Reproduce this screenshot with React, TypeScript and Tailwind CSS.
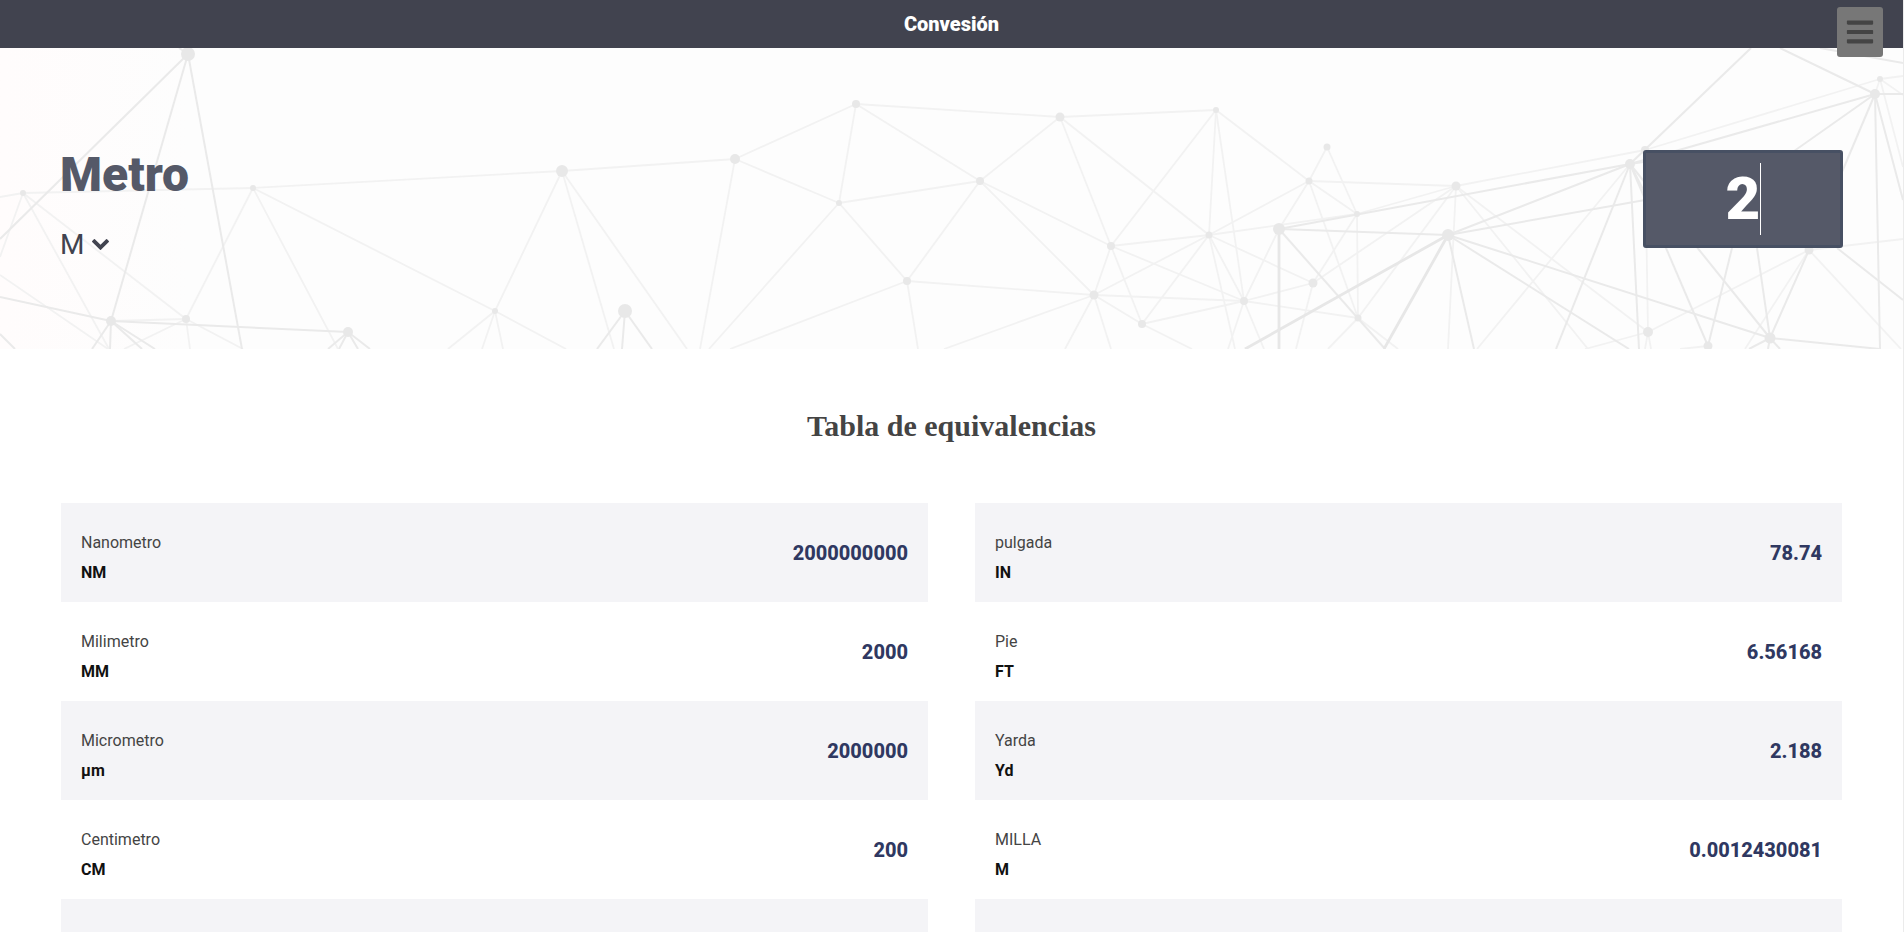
import { useState } from "react";
import { FaBars } from "react-icons/fa";

type Line = [number, number, number, number];
type Node = [number, number, number];

const thinLines: Line[] = [
  [23, 193, 0, 197], [23, 193, 253, 188], [23, 193, 0, 257], [23, 193, 109, 349], [23, 193, 186, 319],
  [253, 188, 562, 171], [253, 188, 186, 319], [253, 188, 338, 349], [253, 188, 495, 311], [0, 275, 108, 349],
  [111, 321, 186, 319], [186, 319, 190, 349], [186, 319, 243, 349], [186, 319, 124, 349], [495, 311, 448, 349],
  [562, 171, 735, 159], [562, 171, 495, 311], [562, 171, 614, 349], [562, 171, 687, 349], [735, 159, 856, 104],
  [735, 159, 839, 203], [735, 159, 700, 349], [856, 104, 839, 203], [856, 104, 980, 181], [856, 104, 1060, 117],
  [839, 203, 980, 181], [839, 203, 907, 281], [839, 203, 709, 349], [907, 281, 980, 181], [907, 281, 1094, 295],
  [907, 281, 730, 349], [907, 281, 918, 349], [495, 311, 482, 349], [495, 311, 503, 349], [495, 311, 566, 349],
  [1094, 295, 944, 349], [1060, 117, 1216, 110], [1060, 117, 980, 181], [1060, 117, 1111, 246], [1060, 117, 1209, 235],
  [1216, 110, 1111, 246], [1216, 110, 1209, 235], [1216, 110, 1244, 301], [1216, 110, 1309, 181], [980, 181, 1111, 246],
  [980, 181, 1094, 295], [1111, 246, 1094, 295], [1111, 246, 1209, 235], [1111, 246, 1142, 324], [1111, 246, 1244, 301],
  [1209, 235, 1094, 295], [1209, 235, 1142, 324], [1209, 235, 1244, 301], [1209, 235, 1313, 283], [1209, 235, 1309, 181],
  [1209, 235, 1357, 214], [1209, 235, 1235, 349], [1094, 295, 1244, 301], [1094, 295, 1142, 324], [1094, 295, 1065, 349],
  [1094, 295, 1111, 349], [1142, 324, 1244, 301], [1142, 324, 1192, 349], [1244, 301, 1313, 283], [1244, 301, 1358, 318],
  [1244, 301, 1228, 349], [1244, 301, 1264, 349], [1244, 301, 1279, 229], [1279, 229, 1309, 181], [1309, 181, 1327, 147],
  [1309, 181, 1456, 186], [1309, 181, 1357, 214], [1309, 181, 1358, 318], [1327, 147, 1357, 214], [1357, 214, 1313, 283],
  [1357, 214, 1358, 318], [1357, 214, 1456, 186], [1313, 283, 1296, 349], [1313, 283, 1456, 186], [1358, 318, 1456, 186],
  [1358, 318, 1328, 349], [1358, 318, 1398, 349], [1456, 186, 1645, 150], [1645, 150, 1880, 79], [1880, 79, 1903, 76],
  [1880, 79, 1903, 95], [1880, 79, 1903, 167], [1880, 79, 1875, 94], [1809, 250, 1745, 349], [1809, 250, 1648, 332],
  [1809, 250, 1903, 239], [1809, 250, 1901, 349], [1645, 150, 1648, 332], [1630, 164, 1477, 349], [1456, 186, 1448, 349],
  [1456, 186, 1648, 332], [1456, 186, 1588, 349], [1648, 332, 1585, 349], [1648, 332, 1645, 349], [1648, 332, 1651, 349],
  [1708, 346, 1680, 349],
];

const mediumLines: Line[] = [
  [188, 54, 0, 239], [188, 54, 111, 321], [188, 54, 242, 349], [188, 54, 179, 48], [111, 321, 0, 297],
  [111, 321, 348, 332], [111, 321, 92, 349], [111, 321, 110, 349], [111, 321, 142, 349], [111, 321, 155, 349],
  [348, 332, 328, 349], [348, 332, 339, 349], [348, 332, 358, 349], [348, 332, 370, 349], [0, 334, 15, 349],
  [625, 311, 597, 349], [625, 311, 622, 349], [625, 311, 652, 349], [1279, 229, 1630, 164], [1279, 229, 1448, 235],
  [1279, 229, 1385, 349], [1448, 235, 1630, 164], [1448, 235, 1645, 200], [1448, 235, 1474, 349], [1448, 235, 1629, 349],
  [1448, 235, 1770, 338], [1630, 164, 1875, 94], [1630, 164, 1751, 48], [1780, 48, 1875, 94], [1820, 48, 1903, 63],
  [1875, 94, 1903, 94], [1875, 94, 1809, 250], [1875, 94, 1770, 168], [1875, 94, 1880, 349], [1875, 94, 1903, 200],
  [1630, 164, 1650, 161], [1630, 164, 1650, 203], [1630, 164, 1639, 349], [1630, 164, 1556, 349], [1630, 164, 1708, 346],
  [1630, 164, 1770, 338], [1732, 248, 1708, 346], [1757, 248, 1770, 338], [1809, 250, 1770, 338], [1837, 248, 1903, 300],
  [1770, 338, 1880, 349], [1770, 338, 1749, 349], [1770, 338, 1768, 349], [1770, 338, 1780, 349],
];

const thickLines: Line[] = [
  [1448, 235, 1245, 349], [1448, 235, 1384, 349], [1279, 229, 1279, 349],
];

const nodes: Node[] = [
  [188, 54, 7], [23, 193, 3], [253, 188, 3], [111, 321, 5], [186, 319, 4], [348, 332, 5], [562, 171, 6],
  [735, 159, 5], [856, 104, 4], [839, 203, 3], [907, 281, 4], [495, 311, 3], [625, 311, 7], [1060, 117, 4.5],
  [1216, 110, 3], [980, 181, 4], [1111, 246, 4], [1094, 295, 4.5], [1142, 324, 4], [1209, 235, 3.5],
  [1244, 301, 4], [1279, 229, 6], [1309, 181, 3.5], [1327, 147, 3.5], [1357, 214, 3], [1313, 283, 4.5],
  [1358, 318, 3.5], [1456, 186, 4.5], [1448, 235, 6], [1630, 164, 5], [1645, 150, 4], [1875, 94, 5],
  [1880, 79, 3], [1809, 250, 4.5], [1648, 332, 5], [1708, 346, 4.5], [1770, 338, 5.5],
];

function LineGroup({ lines, stroke, width }: { lines: Line[]; stroke: string; width: number }) {
  return (
    <g stroke={stroke} strokeWidth={width}>
      {lines.map(([x1, y1, x2, y2], i) => (
        <line key={i} x1={x1} y1={y1} x2={x2} y2={y2} />
      ))}
    </g>
  );
}

function Network() {
  return (
    <svg
      className="absolute inset-0 h-full w-full"
      viewBox="0 48 1903 301"
      preserveAspectRatio="xMidYMid slice"
      aria-hidden="true"
    >
      <LineGroup lines={thinLines} stroke="#f2f2f2" width={1.8} />
      <LineGroup lines={mediumLines} stroke="#eaeaea" width={2} />
      <LineGroup lines={thickLines} stroke="#e7e7e7" width={2.8} />
      <g fill="#e8e8e8">
        {nodes.map(([cx, cy, r], i) => (
          <circle key={i} cx={cx} cy={cy} r={r} />
        ))}
      </g>
    </svg>
  );
}

function ChevronDown() {
  return (
    <svg
      className="pointer-events-none h-[11px] w-[17px]"
      viewBox="90 533 1612 1035"
      fill="currentColor"
      aria-hidden="true"
    >
      <path d="M1683 808l-742 741q-19 19-45 19t-45-19l-742-741q-19-19-19-45.500t19-45.500l166-165q19-19 45-19t45 19l531 531 531-531q19-19 45-19t45 19l166 165q19 19 19 45.500t-19 45.500z" />
    </svg>
  );
}

interface Unit {
  name: string;
  symbol: string;
  value: string;
}

const metric: Unit[] = [
  { name: "Nanometro", symbol: "NM", value: "2000000000" },
  { name: "Milimetro", symbol: "MM", value: "2000" },
  { name: "Micrometro", symbol: "µm", value: "2000000" },
  { name: "Centimetro", symbol: "CM", value: "200" },
];

const imperial: Unit[] = [
  { name: "pulgada", symbol: "IN", value: "78.74" },
  { name: "Pie", symbol: "FT", value: "6.56168" },
  { name: "Yarda", symbol: "Yd", value: "2.188" },
  { name: "MILLA", symbol: "M", value: "0.0012430081" },
];

function UnitList({ units }: { units: Unit[] }) {
  return (
    <ul className="min-w-0 flex-1">
      {units.map((unit) => (
        <li
          key={unit.name}
          className="flex h-[99px] items-center justify-between px-5 odd:bg-[#f4f4f7]"
        >
          <div className="pt-[10px] leading-[30px]">
            <p className="text-[#444]">{unit.name}</p>
            <p className="font-bold text-[#111]">{unit.symbol}</p>
          </div>
          <p className="text-xl font-extrabold text-[#2f3861]">{unit.value}</p>
        </li>
      ))}
      <li className="h-[99px] odd:bg-[#f4f4f7]" />
    </ul>
  );
}

export default function App() {
  const [amount, setAmount] = useState("2");

  return (
    <div className="h-screen overflow-hidden border-r border-[#ebebeb] bg-white font-[Roboto,sans-serif] text-base">
      <header className="relative z-10 flex h-12 items-center justify-center bg-[#41434f]">
        <h1 className="text-xl font-black text-white">Convesión</h1>
        <button
          type="button"
          aria-label="Menú"
          className="absolute top-[7px] right-5 flex h-[50px] w-[46px] items-center justify-center rounded-[3px] bg-[#777] text-[#444]"
        >
          <FaBars className="size-[30px]" />
        </button>
      </header>

      <section className="relative h-[301px] bg-[#fdfdfd] bg-linear-to-r from-[#fffcfc] to-[#fdfdfd] to-10%">
        <Network />
        <div className="relative flex h-full items-center justify-between px-[60px]">
          <div className="flex flex-col pt-3">
            <label htmlFor="unit" className="text-5xl leading-[56px] font-black text-[#555968]">
              Metro
            </label>
            <div className="mt-6 flex items-center gap-2 text-[#41434f]">
              <select
                id="unit"
                defaultValue="M"
                className="field-sizing-content cursor-pointer appearance-none bg-transparent text-[28px] leading-9 outline-none"
              >
                <option>M</option>
                <option>CM</option>
                <option>MM</option>
              </select>
              <ChevronDown />
            </div>
          </div>
          <div className="relative">
            <input
              type="text"
              inputMode="decimal"
              aria-label="Cantidad"
              value={amount}
              onChange={(e) => setAmount(e.target.value)}
              className="block h-[98px] w-[200px] rounded-[3px] border-3 border-[#475063] bg-[#555968] text-center text-6xl font-black text-white caret-transparent outline-none"
            />
            <span className="pointer-events-none absolute top-[13px] left-1/2 ml-[17px] h-[72px] w-px bg-white" />
          </div>
        </div>
      </section>

      <main className="px-[61px] pt-[57px]">
        <h2 className="text-center font-['Liberation_Serif',serif] text-[30px] leading-10 font-bold text-[#444]">
          Tabla de equivalencias
        </h2>
        <div className="mt-[57px] flex gap-[47px]">
          <UnitList units={metric} />
          <UnitList units={imperial} />
        </div>
      </main>
    </div>
  );
}
